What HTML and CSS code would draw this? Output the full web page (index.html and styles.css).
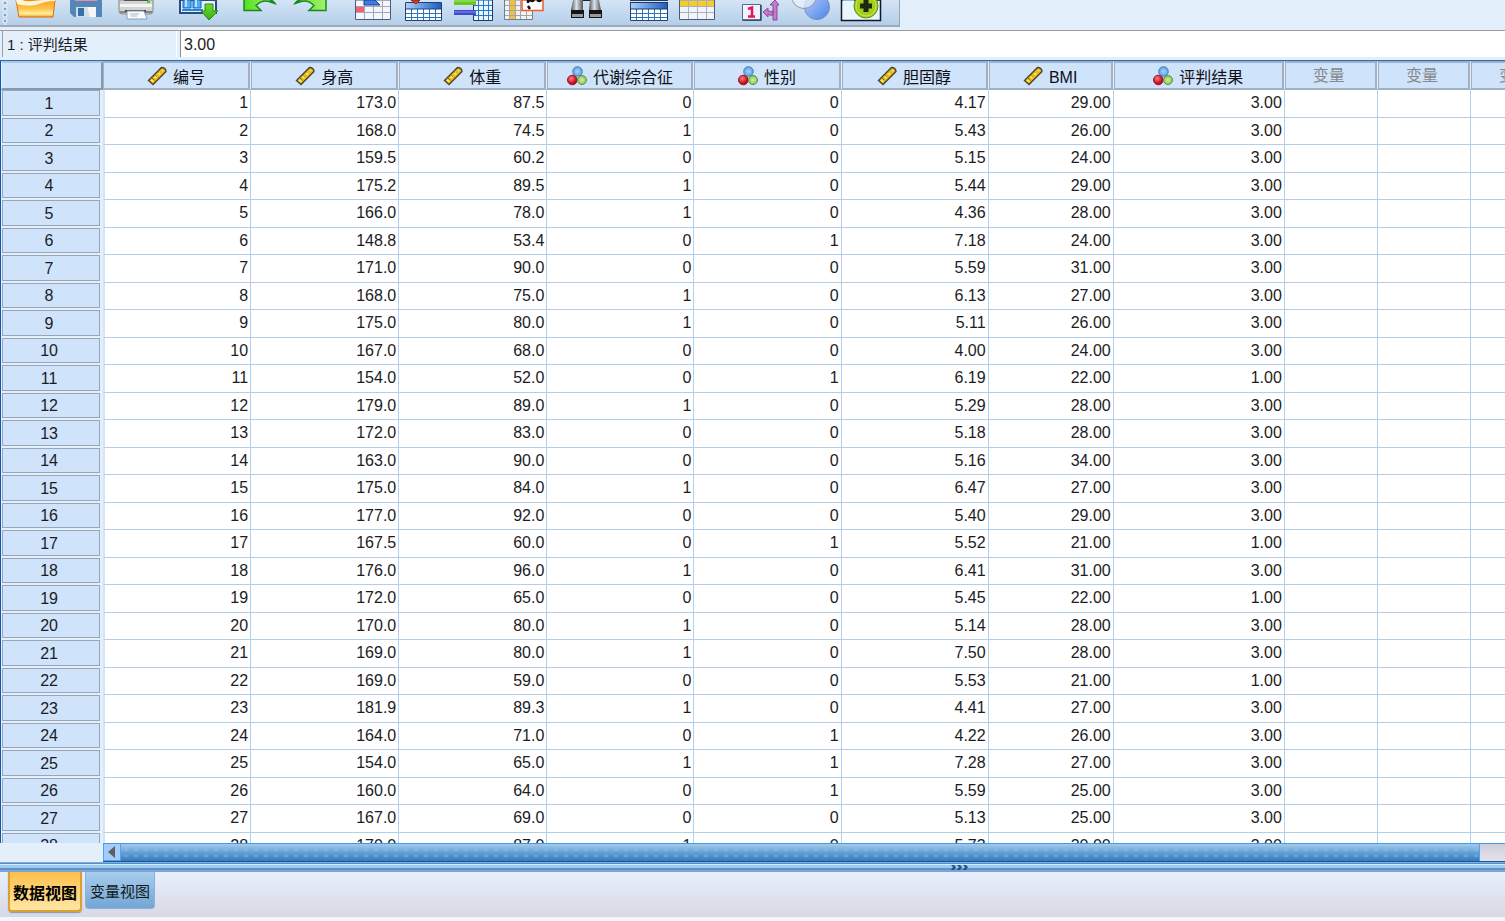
FILE: index.html
```html
<!DOCTYPE html>
<html lang="zh-CN">
<head>
<meta charset="utf-8">
<title>数据视图</title>
<link rel="stylesheet" href="styles.css">
</head>
<body>
<svg class="defs" aria-hidden="true">
<defs>
<linearGradient id="orange" x2="0" y2="1"><stop offset="0" stop-color="#ff9e22"/><stop offset=".5" stop-color="#ffc34a"/><stop offset=".8" stop-color="#fff0a0"/><stop offset="1" stop-color="#ffa020"/></linearGradient>
<linearGradient id="green" x2="0" y2="1"><stop offset="0" stop-color="#6fdc2c"/><stop offset="1" stop-color="#3aad12"/></linearGradient>
<linearGradient id="lime"><stop offset="0" stop-color="#55e020"/><stop offset="1" stop-color="#a4f070"/></linearGradient>
<linearGradient id="blue"><stop offset="0" stop-color="#a8d0fa"/><stop offset="1" stop-color="#1560c4"/></linearGradient>
<linearGradient id="metal"><stop offset="0" stop-color="#555"/><stop offset=".45" stop-color="#dce4ea"/><stop offset="1" stop-color="#555"/></linearGradient>
<linearGradient id="venn" x2="1" y2="1"><stop offset="0" stop-color="#b8d0fa"/><stop offset="1" stop-color="#4a84e8"/></linearGradient>
<radialGradient id="rball" cx=".4" cy=".35"><stop offset="0" stop-color="#ff8088"/><stop offset="1" stop-color="#c00c20"/></radialGradient>
<radialGradient id="bball"><stop offset="0" stop-color="#a8d4ff"/><stop offset="1" stop-color="#5a9ee4"/></radialGradient>
<radialGradient id="gball"><stop offset="0" stop-color="#d0f0a0"/><stop offset="1" stop-color="#88c454"/></radialGradient>
<symbol id="scale" viewBox="0 0 20 20"><path d="M1.500 14.500 14.500 1.500Q18.500 1.500 19 5.500L6 18.500Z" fill="#e8b81c" stroke="#4a4436" stroke-width="1.400"/><path d="m5 12 2.500 2.500m.500-5.500 2.500 2.500m.500-5.500 2.500 2.500m.500-5.500 2.500 2.500" fill="none" stroke="#7a6424" stroke-width="1"/><path d="m4.500 15.500 1.500-1.500m2-2 1.500-1.500m2-2L13 7m2-2 1-1" fill="none" stroke="#ffe83c" stroke-width="3"/></symbol>
<symbol id="nominal" viewBox="0 0 20 20"><circle cx="10.500" cy="5.500" r="4.800" fill="url(#bball)" stroke="#4a80bc"/><circle cx="5.300" cy="14" r="4.800" fill="url(#rball)" stroke="#a01824"/><circle cx="15" cy="14" r="4.500" fill="url(#gball)" stroke="#5c9140"/></symbol>
</defs>
</svg>

<header class="toolbar-row">
<div class="toolbar" role="toolbar">
  <div class="group">
    <button class="tool" aria-label="打开"><svg viewBox="16 0 40 28"><path d="M16 0h39l-2 17H19Z" fill="url(#orange)" stroke="#d8710c"/><path d="M16 0h6q5 2 11 1 8-1 12-1h10v1q-10 0-16 3-9 3-22 0Z" fill="#fff6d8"/></svg></button>
    <button class="tool" aria-label="保存"><svg viewBox="66 0 40 28"><path d="M70 0h32v17H74l-4-4Z" fill="#5386b9"/><path d="M75 0h22v1H75Z" fill="#f08c9c"/><path d="M76 7h20v10H76Z" fill="#d6dde3"/><path d="M78 8h6v8h-6Z" fill="#356fae"/><path d="M87 7h9v10h-6Z" fill="#f4f6f8"/></svg></button>
    <button class="tool" aria-label="打印"><svg viewBox="116 0 40 28"><path d="M119 0h34v11q0 3-3 3h-28q-3 0-3-3Z" fill="#d3d3d3" stroke="#8b8b8b"/><path d="M124 0h24v1h-24Z" fill="#555"/><path d="M120 4h32v3h-32Z" fill="#f4f4f4"/><path d="M120 11h32v2h-32Z" fill="#858585"/><path d="M125 10h21v2h-21Z" fill="#444"/><path d="M127 11h17l3 8h-20Z" fill="#f9fcff" stroke="#8d9db5"/><path d="M130 14h9m-8 2h6" stroke="#a8b6ca"/><path d="M147 2h3" stroke="#48d622" stroke-width="2"/></svg></button>
  </div>
  <div class="group">
    <button class="tool" aria-label="重新调用对话框"><svg viewBox="178 0 40 28"><path d="M180 0h36v13h-36Z" fill="#e4f0fc" stroke="#2b4a80" stroke-width="2"/><path d="M183 0h8v8h-8Zm10 0h8v8h-8Z" fill="#55aaf0" stroke="#1266ba"/><path d="M185 0h2v7h-2Zm10 0h2v7h-2Z" fill="#b9e1ff"/><path d="M182 10h21" stroke="#2783d8" stroke-width="2"/><path d="M205 4h8v7h5l-9 9-8-9h4Z" fill="url(#green)" stroke="#268b1a"/></svg></button>
  </div>
  <div class="group">
    <button class="tool" aria-label="撤销"><svg viewBox="240 0 40 28"><path d="M244 0v10.500h17l-5-5q5-6 13-4l6 2q-3-4-9-5Z" fill="url(#lime)"/><path d="M244 0v10.500h17l-5-5q6-6 13-4l6 2q-2-3-6-4" fill="none" stroke="#188a20" stroke-width="1.500"/></svg></button>
    <button class="tool" aria-label="重做"><svg viewBox="290 0 40 28"><path d="M326 0v10.500h-17l5-5q-5-6-13-4l-6 2q3-4 9-5Z" fill="url(#lime)"/><path d="M326 0v10.500h-17l5-5q-6-6-13-4l-6 2q2-3 6-4" fill="none" stroke="#188a20" stroke-width="1.500"/></svg></button>
  </div>
  <div class="group">
    <button class="tool" aria-label="转到个案"><svg viewBox="352 0 40 28"><path d="M355.500 0h35v19.500h-35Z" fill="#f4f6fc" stroke="#50587c"/><path d="M356 7h8v6h-8Z" fill="#f4616e"/><path d="M364.500 0v19m9-19v19m9-19v19M356 6.500h34m-34 6h34" stroke="#a2a7bd" fill="none"/><path d="M364 0h11l5 5h-16Z" fill="#3f7de0" stroke="#1c3f98"/></svg></button>
    <button class="tool" aria-label="转到变量"><svg viewBox="402 0 40 28"><path d="M405.500 3h36v17.500h-36Z" fill="#fff" stroke="#2c3c70"/><path d="M406 3h35v6h-35Z" fill="url(#blue)"/><path d="M411.500 9v11m6-11v11m6-11v11m6-11v11m6-11v11M406 13.500h35m-35 4h35" stroke="#2876c6"/><path d="M405.500 9h36M405.500 2.500h36" stroke="#2c3c70"/><path d="M411 0h9l-4 4Z" fill="#d83d22" stroke="#8c2418"/></svg></button>
    <button class="tool" aria-label="变量"><svg viewBox="452 0 40 28"><path d="M473.500 0h19v20.500h-19Z" fill="#e4f6ff" stroke="#26366a"/><path d="M478.500 0v20m5-20v20m5-20v20M474 5.500h18m-18 5h18m-18 5h18" stroke="#2876c6"/><path d="M454 0h22v5h-22Z" fill="#67c727"/><path d="M454 1h22" stroke="#a5ee67"/><path d="M454 10h22v5h-22Z" fill="#3c4bc8"/><path d="M454 12h22" stroke="#8090ff"/></svg></button>
    <button class="tool" aria-label="运行描述统计"><svg viewBox="502 0 40 28"><path d="M504.500 0h28v19.500h-28Z" fill="#f2f3ee" stroke="#6d7e98"/><path d="M510 0h5v19h-5Z" fill="#edc142"/><path d="M509.500 0v19m6-19v19m5-19v19m6-19v19M505 5.500h27m-27 5h27m-27 5h27" stroke="#a2a6aa"/><path d="M522 0h21v10.500h-21Z" fill="#fff" stroke="#f05a2c" stroke-width="1.500"/><path d="M528 0v3m0 3 2 3m-1-9q4 2 5 0m3 0q3 2 4 0" stroke="#111" stroke-width="2.500" fill="none"/></svg></button>
  </div>
  <div class="group">
    <button class="tool" aria-label="查找"><svg viewBox="564 0 40 28"><path d="M573 0h10v10h-12Z" fill="url(#metal)"/><path d="M590 0h9l2 10h-12Z" fill="url(#metal)"/><path d="M583 0h7v1h-7Z" fill="#222"/><path d="M571 10h13v8h-13Zm18 0h13v8h-13Z" fill="#151515"/><path d="M572 14h11v3h-11Zm18 0h11v3h-11Z" fill="#9a9a9a"/></svg></button>
  </div>
  <div class="group">
    <button class="tool" aria-label="拆分文件"><svg viewBox="626 0 40 28"><path d="M630.500 3h37v17.500h-37Z" fill="#fff" stroke="#2c3c70"/><path d="M631 3h36v6h-36Z" fill="url(#blue)"/><path d="M636.500 9v11m6-11v11m6-11v11m6-11v11m6-11v11M631 13.500h36m-36 4h36" stroke="#2876c6"/><path d="M630 .5h38M630 9h38M630 2.500h38" stroke="#27345f"/></svg></button>
    <button class="tool" aria-label="个案加权"><svg viewBox="676 0 40 28"><path d="M679.500 0h35v19.500h-35Z" fill="#f2f4fb" stroke="#50587c"/><path d="M680 1h34v5h-34Z" fill="#f3cf26"/><path d="M688.500 0v19m9-19v19m9-19v19M680 6.500h34m-34 6h34M680 .5h34" stroke="#adb0bb"/></svg></button>
  </div>
  <div class="group">
    <button class="tool" aria-label="值标签"><svg viewBox="738 0 40 28"><path d="M742.500 4.500h18v16h-18Z" fill="#edf3ff" stroke="#596989"/><path d="M743 20h18V5" fill="none" stroke="#364769" stroke-width="1.500"/><path d="m748 9 4-1.500v8m-4 1h7" fill="none" stroke="#e81456" stroke-width="2.500"/><path d="M773 20V5h-3l5-5 4 5h-2v15Zm0-5q-3 1-5-1v3l-5-5 5-4v3q3 1 5 0Z" fill="#ca78ce" stroke="#874b9a"/></svg></button>
    <button class="tool" aria-label="使用变量集"><svg viewBox="788 0 40 28"><circle cx="817" cy="7" r="12.500" fill="url(#venn)" stroke="#758bb4"/><circle cx="804" cy="-4" r="12.500" fill="#edf4fb" fill-opacity=".65" stroke="#9297a6"/></svg></button>
    <button class="tool" aria-label="定制工具栏"><svg viewBox="838 0 40 28"><path d="M841.500 0h39v20.500h-39Z" fill="#eaf6ff" stroke="#111827" stroke-width="1.500"/><path d="M843 0h11v1h-11Z" fill="#8bbbe5"/><circle cx="866" cy="6" r="12" fill="#a5cf16" stroke="#648b17"/><circle cx="866" cy="6" r="10" fill="none" stroke="#c7e75c"/><path d="M866 0v12m-6-6h12" stroke="#1c2810" stroke-width="5"/></svg></button>
  </div>
</div>
</header>

<div class="cellbar">
  <label class="cell-name" for="cell-value">1 : 评判结果</label>
  <input class="cell-value" id="cell-value" type="text" value="3.00">
</div>

<main class="sheet">
<table class="grid">
<colgroup><col class="c-row"><col class="c-std"><col class="c-std"><col class="c-std"><col class="c-mid"><col class="c-mid"><col class="c-mid"><col class="c-bmi"><col class="c-result"><col class="c-var"><col class="c-var"><col class="c-var"></colgroup>
<thead><tr><td class="corner"></td>
<th scope="col"><svg><use href="#scale"/></svg>编号</th>
<th scope="col"><svg><use href="#scale"/></svg>身高</th>
<th scope="col"><svg><use href="#scale"/></svg>体重</th>
<th scope="col"><svg><use href="#nominal"/></svg>代谢综合征</th>
<th scope="col"><svg><use href="#nominal"/></svg>性别</th>
<th scope="col"><svg><use href="#scale"/></svg>胆固醇</th>
<th scope="col"><svg><use href="#scale"/></svg>BMI</th>
<th scope="col"><svg><use href="#nominal"/></svg>评判结果</th>
<th scope="col" class="unused">变量</th><th scope="col" class="unused">变量</th><th scope="col" class="unused">变量</th></tr></thead>
<tbody>
<tr><th>1<td>1<td>173.0<td>87.5<td>0<td>0<td>4.17<td>29.00<td>3.00<td><td><td>
<tr><th>2<td>2<td>168.0<td>74.5<td>1<td>0<td>5.43<td>26.00<td>3.00<td><td><td>
<tr><th>3<td>3<td>159.5<td>60.2<td>0<td>0<td>5.15<td>24.00<td>3.00<td><td><td>
<tr><th>4<td>4<td>175.2<td>89.5<td>1<td>0<td>5.44<td>29.00<td>3.00<td><td><td>
<tr><th>5<td>5<td>166.0<td>78.0<td>1<td>0<td>4.36<td>28.00<td>3.00<td><td><td>
<tr><th>6<td>6<td>148.8<td>53.4<td>0<td>1<td>7.18<td>24.00<td>3.00<td><td><td>
<tr><th>7<td>7<td>171.0<td>90.0<td>0<td>0<td>5.59<td>31.00<td>3.00<td><td><td>
<tr><th>8<td>8<td>168.0<td>75.0<td>1<td>0<td>6.13<td>27.00<td>3.00<td><td><td>
<tr><th>9<td>9<td>175.0<td>80.0<td>1<td>0<td>5.11<td>26.00<td>3.00<td><td><td>
<tr><th>10<td>10<td>167.0<td>68.0<td>0<td>0<td>4.00<td>24.00<td>3.00<td><td><td>
<tr><th>11<td>11<td>154.0<td>52.0<td>0<td>1<td>6.19<td>22.00<td>1.00<td><td><td>
<tr><th>12<td>12<td>179.0<td>89.0<td>1<td>0<td>5.29<td>28.00<td>3.00<td><td><td>
<tr><th>13<td>13<td>172.0<td>83.0<td>0<td>0<td>5.18<td>28.00<td>3.00<td><td><td>
<tr><th>14<td>14<td>163.0<td>90.0<td>0<td>0<td>5.16<td>34.00<td>3.00<td><td><td>
<tr><th>15<td>15<td>175.0<td>84.0<td>1<td>0<td>6.47<td>27.00<td>3.00<td><td><td>
<tr><th>16<td>16<td>177.0<td>92.0<td>0<td>0<td>5.40<td>29.00<td>3.00<td><td><td>
<tr><th>17<td>17<td>167.5<td>60.0<td>0<td>1<td>5.52<td>21.00<td>1.00<td><td><td>
<tr><th>18<td>18<td>176.0<td>96.0<td>1<td>0<td>6.41<td>31.00<td>3.00<td><td><td>
<tr><th>19<td>19<td>172.0<td>65.0<td>0<td>0<td>5.45<td>22.00<td>1.00<td><td><td>
<tr><th>20<td>20<td>170.0<td>80.0<td>1<td>0<td>5.14<td>28.00<td>3.00<td><td><td>
<tr><th>21<td>21<td>169.0<td>80.0<td>1<td>0<td>7.50<td>28.00<td>3.00<td><td><td>
<tr><th>22<td>22<td>169.0<td>59.0<td>0<td>0<td>5.53<td>21.00<td>1.00<td><td><td>
<tr><th>23<td>23<td>181.9<td>89.3<td>1<td>0<td>4.41<td>27.00<td>3.00<td><td><td>
<tr><th>24<td>24<td>164.0<td>71.0<td>0<td>1<td>4.22<td>26.00<td>3.00<td><td><td>
<tr><th>25<td>25<td>154.0<td>65.0<td>1<td>1<td>7.28<td>27.00<td>3.00<td><td><td>
<tr><th>26<td>26<td>160.0<td>64.0<td>0<td>1<td>5.59<td>25.00<td>3.00<td><td><td>
<tr><th>27<td>27<td>167.0<td>69.0<td>0<td>0<td>5.13<td>25.00<td>3.00<td><td><td>
<tr><th>28<td>28<td>170.0<td>87.0<td>1<td>0<td>5.73<td>30.00<td>3.00<td><td><td>
</tbody>
</table>
</main>

<div class="scrollbar">
  <button class="scroll-left" aria-label="向左滚动"><svg viewBox="0 0 8 12"><path d="M7 0v12L0 6Z" fill="#5d5d62"/></svg></button>
  <div class="thumb"></div>
</div>
<div class="splitter"><svg viewBox="0 0 18 5"><path d="M0 0h3l2 2-2 3H0l2-3Zm6 0h3l2 2-2 3H6l2-3Zm6 0h3l2 2-2 3h-3l2-3Z" fill="#25508c"/></svg></div>
<nav class="tabs">
  <button class="tab active">数据视图</button>
  <button class="tab">变量视图</button>
</nav>
</body>
</html>
```
FILE: styles.css
```css
* { box-sizing: border-box; }

body {
  display: flex;
  flex-direction: column;
  height: 100vh;
  margin: 0;
  overflow: hidden;
  background: #e4effc;
  color: #1c1c24;
  font: 16px/20px "Liberation Sans", "Noto Sans CJK SC", sans-serif;
}

button, input { font: inherit; color: inherit; }
.defs { position: absolute; width: 0; height: 0; }

/* Toolbar */
.toolbar-row {
  display: flex;
  flex: none;
  height: 31px;
  padding-bottom: 3px;
  border-bottom: 1px solid #9a9ca0;
}
.toolbar {
  display: flex;
  gap: 22px;
  padding: 0 21px 0 16px;
  border-right: 1px solid #a0a4ac;
  border-bottom: 2px solid #a3a9b2;
  background:
    radial-gradient(circle at 3px 3px, #8fa3bb 1px, #f4f9ff 2px, transparent 3px) 2px 0 / 6px 6px repeat-y,
    linear-gradient(#d4e4f5, #b4cfea);
}
.group { display: flex; gap: 10px; }
.tool {
  width: 40px;
  height: 25px;
  padding: 0;
  border: 0;
  background: none;
}
.tool svg { display: block; width: 40px; height: 28px; overflow: visible; }

/* Cell name and value */
.cellbar {
  display: flex;
  flex: none;
  gap: 3px;
  height: 29px;
  padding: 0 0 3px 2px;
}
.cell-name {
  width: 175px;
  padding: 4px;
  border: solid #9a9ca0;
  border-width: 0 0 0 1px;
  border-right: 1px solid #fff;
  background: #e4effc;
  font-size: 15px;
}
.cell-value {
  flex: 1;
  min-width: 0;
  padding: 2px 3px 0;
  border: 0;
  border-left: 1px solid #8c9096;
  border-radius: 0;
  background: #fff;
  outline: 0;
}

/* Data grid */
.sheet {
  flex: 1;
  min-height: 0;
  overflow: hidden;
  border-top: 1px solid #1f6fc0;
  border-left: 1px solid #0f58ac;
}
.grid {
  width: 1563px;
  border-spacing: 0;
  table-layout: fixed;
}
.c-row { width: 102px; }
.c-std { width: 148px; }
.c-mid { width: 147px; }
.c-bmi { width: 125px; }
.c-result { width: 171px; }
.c-var { width: 93px; }

.grid thead tr { height: 28px; }
.grid tr > * { padding: 0; font-weight: 400; white-space: nowrap; }
.grid thead th {
  padding: 3px 2px 0 0;
  border: solid #a3b0c4;
  border-width: 2px 1px 2px 1px;
  border-right-color: #e4effc;
  background: #cfe3fb;
  box-shadow: inset -2px 0 #a3b0c4;
  color: #101014;
  line-height: 20px;
  vertical-align: middle;
}
.grid thead th svg {
  width: 20px;
  height: 20px;
  margin-right: 6px;
  vertical-align: -3px;
}
.grid thead .unused { padding: 1px 5px 0 0; color: #85888c; }
.grid .corner {
  border: solid #8a97a8;
  border-width: 2px 2px 2px 1px;
  border-top-color: #b4c4d8;
  border-left-color: #e4effc;
  background: #cfe3fb;
}
.grid tbody tr { height: 27px; }
.grid tbody tr:nth-child(odd) { height: 28px; }
.grid tbody th {
  padding: 0 6px 1px 0;
  background: #cfe3fb;
  box-shadow:
    inset 1px 0 #e4effc,
    inset -3px 0 #e4effc,
    inset 0 -2px #e4effc,
    inset 2px 0 #98a6ba,
    inset -4px 0 #98a6ba,
    inset 0 1px #98a6ba,
    inset 0 -3px #98a6ba;
}
.grid tbody td {
  padding: 0 2px 1px 0;
  border-right: 1px solid #b4d0ec;
  border-bottom: 1px solid #b4cee8;
  background: #fff;
  text-align: right;
}
.grid tbody th + td { border-left: 2px solid #d4e5f8; }

/* Horizontal scrolling */
.scrollbar {
  display: flex;
  flex: none;
  height: 19px;
  margin-left: 103px;
  padding-right: 25px;
  border-top: 1px solid #3a9af4;
  border-bottom: 1px solid #17599c;
  background: linear-gradient(#d0cedc, #e4e2ea);
}
.scroll-left {
  display: grid;
  place-items: center;
  width: 18px;
  padding: 0;
  border: 1px solid #4ca4f8;
  border-top: 0;
  background: #a4ccf8;
}
.scroll-left svg { width: 8px; height: 12px; }
.thumb {
  flex: 1;
  border-right: 1px solid #4ca4f8;
  background:
    radial-gradient(rgb(150 196 232 / 40%) 1px, transparent 3px) 0 3px / 10px 6px,
    linear-gradient(#a4cbeb, #64a0d4 50%, #327abe);
}
.splitter {
  display: grid;
  flex: none;
  place-items: center;
  height: 10px;
  padding-left: 414px;
  background: linear-gradient(#8ea9c9 1px, #4a93cf 1px 2px, #cfefff 2px 3px, #9ccaf8 3px 6px, #6690bd 6px 8px, #78a6d6 8px);
}
.splitter svg { width: 18px; height: 5px; }

/* View tabs */
.tabs {
  display: flex;
  flex: none;
  align-items: flex-start;
  gap: 3px;
  height: 49px;
  padding-left: 8px;
  border-bottom: 4px solid #f2f5fc;
  background: linear-gradient(#e6f0fc, #d8d8e4);
}
.tab {
  width: 70px;
  height: 37px;
  padding: 3px 0 0;
  border: 1px solid #88b2da;
  border-top: 0;
  border-radius: 0 0 4px 4px;
  background: linear-gradient(#a8cdec, #74a5d4);
  color: #101820;
  font-size: 15px;
  white-space: nowrap;
}
.tab.active {
  width: 74px;
  height: 40px;
  padding-top: 6px;
  border: 2px solid #dca030;
  border-top: 0;
  background: linear-gradient(#fcc04c, #ffe6a4);
  box-shadow: 0 1px 1px #7f99b8;
  color: #000;
  font-size: 16px;
  font-weight: 700;
}
```
